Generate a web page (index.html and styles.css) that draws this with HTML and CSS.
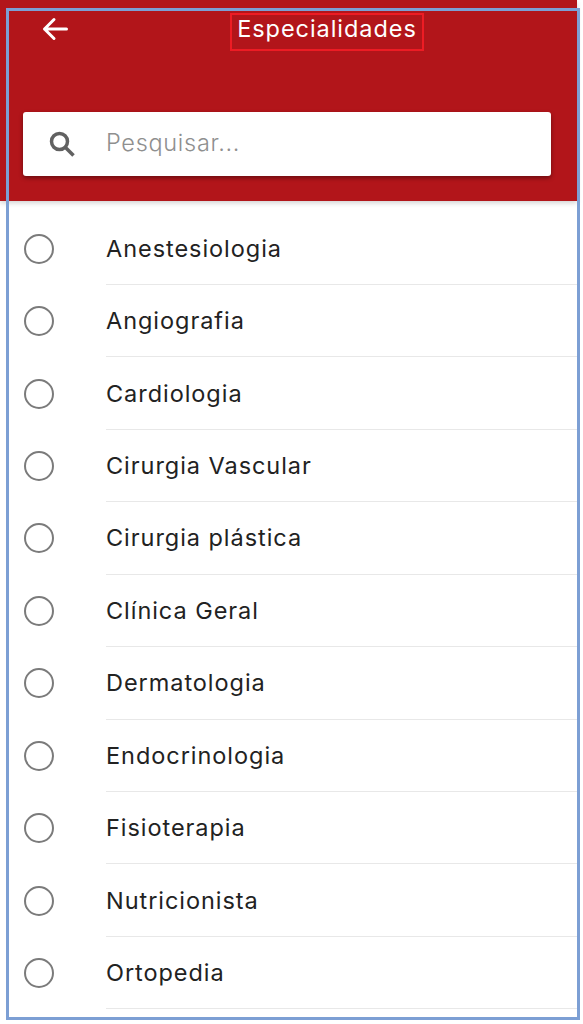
FILE: index.html
```html
<!DOCTYPE html>
<html lang="pt">
<head>
<meta charset="utf-8">
<title>Especialidades</title>
<link rel="stylesheet" href="styles.css">
</head>
<body>
<div class="screen">
  <header class="appbar">
    <div class="topline">
      <svg class="back" viewBox="0 0 26 24" aria-hidden="true"><path d="M24.500 12H2.500M12 2.500L2.500 12l9.500 9.500"/></svg>
      <h1 class="title"><span class="title-box">Especialidades</span></h1>
    </div>
    <div class="search">
      <svg class="search-icon" viewBox="0 0 26 26" aria-hidden="true"><circle cx="10.500" cy="10.500" r="8"/><path d="M16.500 16.500l8 8"/></svg>
      <span class="placeholder">Pesquisar...</span>
    </div>
  </header>
  <ul class="list">
    <li class="item"><span class="radio"></span><span class="label">Anestesiologia</span></li>
    <li class="item"><span class="radio"></span><span class="label">Angiografia</span></li>
    <li class="item"><span class="radio"></span><span class="label">Cardiologia</span></li>
    <li class="item"><span class="radio"></span><span class="label">Cirurgia Vascular</span></li>
    <li class="item"><span class="radio"></span><span class="label">Cirurgia plástica</span></li>
    <li class="item"><span class="radio"></span><span class="label">Clínica Geral</span></li>
    <li class="item"><span class="radio"></span><span class="label">Dermatologia</span></li>
    <li class="item"><span class="radio"></span><span class="label">Endocrinologia</span></li>
    <li class="item"><span class="radio"></span><span class="label">Fisioterapia</span></li>
    <li class="item"><span class="radio"></span><span class="label">Nutricionista</span></li>
    <li class="item"><span class="radio"></span><span class="label">Ortopedia</span></li>
  </ul>
  <div class="frame"></div>
</div>
</body>
</html>
```
FILE: styles.css
```css
* { box-sizing: border-box; }
html, body { margin: 0; padding: 0; background: #fff; }
body { width: 583px; height: 1024px; overflow: hidden; font-family: Inter, "Liberation Sans", sans-serif; }
.screen { position: relative; width: 583px; height: 1024px; }
.appbar { width: 577px; height: 201px; background: #b2151a; box-shadow: 0 2px 5px rgba(0,0,0,.18); padding: 9px 26px 0 23px; position: relative; }
.topline { display: flex; align-items: center; height: 40px; position: relative; }
.back { width: 26px; height: 24px; margin-left: 19px; flex: none; }
.back path { fill: none; stroke: #fff; stroke-width: 3; stroke-linecap: round; stroke-linejoin: round; }
.title { margin: 0; position: absolute; left: 207px; top: 4px; font-size: 23.500px; font-weight: 400; color: #fff; line-height: 38px; }
.title-box { display: block; width: 194px; height: 38px; border: 2px solid #ed1c24; text-align: center; line-height: 28px; letter-spacing: 0.950px; white-space: nowrap; }
.search { margin-top: 63px; height: 64px; background: #fff; border-radius: 3px; box-shadow: 0 2px 4px rgba(0,0,0,.4); display: flex; align-items: center; padding-left: 26px; }
.search-icon { width: 26px; height: 26px; flex: none; }
.search-icon circle, .search-icon path { fill: none; stroke: #616161; stroke-width: 3.500; }
.placeholder { margin: 0 0 3px 31px; font-size: 23.500px; font-weight: 300; color: #8f8f8f; letter-spacing: 0.700px; }
.list { list-style: none; margin: 0; padding: 11.500px 0 0 0; width: 577px; }
.item { display: flex; align-items: center; height: 72.450px; padding-left: 24px; }
.radio { width: 30px; height: 30px; border: 2.500px solid #7b7b7b; border-radius: 50%; flex: none; }
.label { margin-left: 52px; flex: 1; height: 100%; display: flex; align-items: center; font-size: 23.500px; font-weight: 400; color: #222; border-bottom: 1.500px solid #e8e8e8; letter-spacing: 0.950px; }
.frame { position: absolute; left: 6px; top: 8px; width: 574px; height: 1012px; border: 3px solid #7c9fd4; pointer-events: none; }
```
